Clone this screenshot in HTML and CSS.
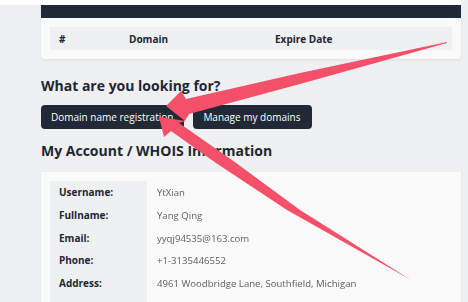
FILE: index.html
```html
<!DOCTYPE html>
<html>
<head>
	<meta charset="utf-8"/>
	<title>My Account</title>
	<link rel="stylesheet" href="styles.css">
</head>
<body>
<div class="topbar"></div>
<div class="wrap">
	<div class="card">
		<div class="card_head"><h2>Expiring domains</h2></div>
		<div class="card_body">
			<table class="list">
				<tr>
					<th class="col_no">#</th>
					<th class="col_domain">Domain</th>
					<th>Expire Date</th>
				</tr>
			</table>
		</div>
	</div>

	<h3 class="title">What are you looking for?</h3>
	<div class="btns">
		<a class="btn" href="#">Domain name registration</a>
		<a class="btn" href="#">Manage my domains</a>
	</div>

	<h3 class="title title_2">My Account / WHOIS Information</h3>
	<div class="card">
		<div class="card_body">
			<table class="info">
				<tr><td class="tab_left">Username:</td><td><span class="val">YtXian</span></td></tr>
				<tr><td class="tab_left">Fullname:</td><td><span class="val">Yang Qing</span></td></tr>
				<tr><td class="tab_left">Email:</td><td><span class="val">yyqj94535@163.com</span></td></tr>
				<tr><td class="tab_left">Phone:</td><td><span class="val">+1-3135446552</span></td></tr>
				<tr><td class="tab_left">Address:</td><td><span class="val">4961 Woodbridge Lane, Southfield, Michigan</span></td></tr>
				<tr><td class="tab_left">Country:</td><td><span class="val">United States</span></td></tr>
			</table>
		</div>
	</div>
</div>

<svg class="marks" width="468" height="302" viewBox="0 0 468 302">
	<polygon fill="#f4506a" points="447,42 300,73 186,99 181,91 166,106 185,121 189,114 300,84 447,43"/>
	<polygon fill="#f4506a" points="159,117 164,137 171,131 216,163 287,210 411,280 300,210 232,160 179,123 186,121"/>
</svg>
</body>
</html>
```

FILE: styles.css
```css
/* =====reset===== */
body, div, span, h2, h3, a, table, tr, th, td { padding: 0; margin: 0; }
table { border-collapse: collapse; border-spacing: 0; }

/* =====public===== */
body { background: #eef0f2; color: #1f2633; font-family: "Open Sans", "Liberation Sans", sans-serif; font-size: 10px; overflow: hidden; }
a { outline: none; text-decoration: none; }

.topbar { position: absolute; left: 0; top: 0; width: 461px; height: 5px; background: #fff; z-index: 2; }
.wrap { width: 420px; padding-left: 41px; }

.card { background: #fafafa; border-radius: 0 0 4px 4px; box-shadow: 0 1px 3px rgba(0,0,0,0.08); }
.card_head { height: 18px; overflow: hidden; background: #212936; padding: 0 15px; }
.card_head h2 { color: #fff; font-size: 14px; line-height: 14px; margin-top: -11px; font-weight: 600; }
.card_body { padding: 9px; }

.list { width: 100%; background: #eef0f2; }
.list th { height: 23px; text-align: left; font-weight: 700; padding-left: 9px; font-size: 10px; }
.list .col_no { width: 61px; }
.list .col_domain { width: 137px; }

.title { font-size: 14px; line-height: 20px; font-weight: 700; margin-top: 17px; }
.title_2 { margin-top: 12px; margin-bottom: 11px; }

.btns { display: flex; gap: 9px; margin: 9px 0 10px; }
.btn { display: block; height: 24px; line-height: 24px; padding: 0 11px 0 10px; background: #212936; color: #fff; border-radius: 4px; font-size: 10px; }

.info { width: 100%; }
.info td { height: 22.7px; padding: 0 10px; }
.info .tab_left { width: 78px; background: #eef0f2; font-weight: 700; padding-left: 9px; }
.val { color: #606060; font-size: 9.6px; filter: blur(0.7px); }

.marks { position: absolute; left: 0; top: 0; z-index: 3; pointer-events: none; }
```
